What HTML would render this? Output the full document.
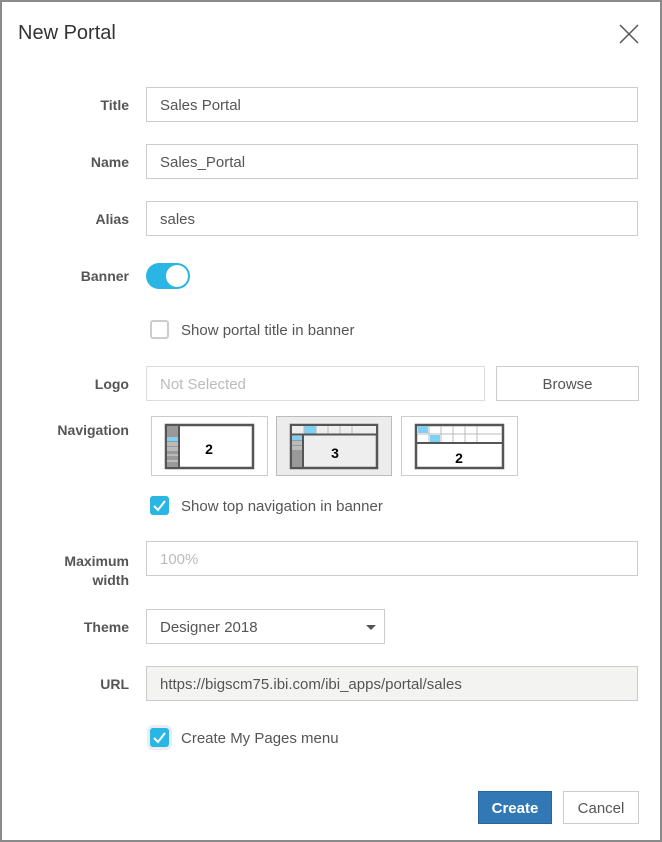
<!DOCTYPE html>
<html><head><style>
*{box-sizing:border-box;margin:0;padding:0}
body{width:662px;height:842px;background:#fff;font-family:"Liberation Sans",sans-serif;position:relative;overflow:hidden}
.frame{position:absolute;left:0;top:0;width:662px;height:842px;border:2px solid #8a8a8a}
.abs{position:absolute}
.lbl{position:absolute;right:533px;font-size:14px;font-weight:bold;color:#555;text-align:right;margin-top:1px}
.inp{position:absolute;left:146px;width:492px;height:35px;border:1px solid #ccc;font-size:15px;color:#555;padding:0 13px;line-height:35px}
.cb{position:absolute;left:150px;width:19px;height:19px;border-radius:3px;background:#2ab6e4}
.cb.off{background:#fff;border:2px solid #ccc}
.cbt{position:absolute;left:181px;font-size:15px;color:#555;margin-top:1px}
.nav{position:absolute;top:416px;height:60px;border:1px solid #ccc;background:#fff}
</style></head><body>
<div class="frame"></div>
<div class="abs" style="left:18px;top:22px;font-size:20px;color:#333">New Portal</div>
<svg class="abs" style="left:619px;top:24px" width="20" height="20"><path d="M1 1L19 19M19 1L1 19" stroke="#555" stroke-width="1.5"/></svg>

<div class="lbl" style="top:96px">Title</div>
<div class="inp" style="top:87px">Sales Portal</div>
<div class="lbl" style="top:153px">Name</div>
<div class="inp" style="top:144px">Sales_Portal</div>
<div class="lbl" style="top:210px">Alias</div>
<div class="inp" style="top:201px">sales</div>
<div class="lbl" style="top:267px">Banner</div>
<div class="abs" style="left:146px;top:263px;width:44px;height:26px;border-radius:13px;background:#2ab6e4"><div class="abs" style="left:20px;top:2px;width:22px;height:22px;border-radius:11px;background:#fff"></div></div>
<div class="cb off" style="top:320px"></div>
<div class="cbt" style="top:321px">Show portal title in banner</div>

<div class="lbl" style="top:375px">Logo</div>
<div class="inp" style="top:366px;width:339px;border-color:#ddd;color:#bbb">Not Selected</div>
<div class="inp" style="top:366px;left:496px;width:143px;text-align:center;color:#555">Browse</div>

<div class="lbl" style="top:421px">Navigation</div>
<div class="nav" style="left:151px;width:117px">
<svg width="117" height="60"><rect x="14" y="8" width="87" height="43" fill="#fff" stroke="#555" stroke-width="2.5"/>
<rect x="15" y="9" width="12" height="41" fill="#999"/><rect x="15" y="20" width="12" height="4" fill="#7fd0f7"/><rect x="15" y="25" width="12" height="4" fill="#bbb"/><rect x="15" y="30" width="12" height="4" fill="#bbb"/><line x1="15" y1="38" x2="27" y2="38" stroke="#ddd"/><line x1="15" y1="44" x2="27" y2="44" stroke="#ddd"/><line x1="27" y1="9" x2="27" y2="50" stroke="#555" stroke-width="2"/>
<text x="57" y="37" font-size="14" font-weight="bold" text-anchor="middle" font-family="Liberation Sans">2</text></svg></div>
<div class="nav" style="left:276px;width:116px;background:#ececec;border-color:#bbb">
<svg width="116" height="60"><rect x="14" y="8" width="86" height="43" fill="#eee" stroke="#555" stroke-width="2.5"/>
<rect x="15" y="9" width="84" height="8" fill="#eee"/><rect x="27" y="9" width="12" height="8" fill="#7fd0f7"/>
<path d="M27 9V17M39 9V17M51 9V17M63 9V17M75 9V17" stroke="#bbb"/><line x1="15" y1="17.5" x2="99" y2="17.5" stroke="#555" stroke-width="2"/>
<rect x="15" y="18" width="11" height="32" fill="#999"/><rect x="15" y="19" width="11" height="4" fill="#7fd0f7"/><rect x="15" y="24" width="11" height="4" fill="#bbb"/><rect x="15" y="29" width="11" height="4" fill="#bbb"/><line x1="26" y1="18" x2="26" y2="50" stroke="#555" stroke-width="2"/>
<text x="58" y="41" font-size="14" font-weight="bold" text-anchor="middle" font-family="Liberation Sans">3</text></svg></div>
<div class="nav" style="left:401px;width:117px">
<svg width="117" height="60"><rect x="14" y="8" width="87" height="43" fill="#fff" stroke="#555" stroke-width="2.5"/>
<rect x="16" y="9" width="10" height="7" fill="#7fd0f7"/><rect x="28" y="18" width="10" height="7" fill="#7fd0f7"/>
<path d="M27 9V25M39 9V25M51 9V25M63 9V25M75 9V25M15 17H100" stroke="#bbb"/><line x1="15" y1="26" x2="100" y2="26" stroke="#555" stroke-width="2"/>
<text x="57" y="46" font-size="14" font-weight="bold" text-anchor="middle" font-family="Liberation Sans">2</text></svg></div>

<div class="cb" style="top:496px"><svg width="19" height="19"><path d="M4 10L8 14L15 5" stroke="#fff" stroke-width="2" fill="none"/></svg></div>
<div class="cbt" style="top:497px">Show top navigation in banner</div>

<div class="lbl" style="top:551px;line-height:19px">Maximum<br>width</div>
<div class="inp" style="top:541px;color:#bbb">100%</div>
<div class="lbl" style="top:618px">Theme</div>
<div class="inp" style="top:609px;width:239px">Designer 2018<span class="abs" style="left:219px;top:15px;width:0;height:0;border-left:5px solid transparent;border-right:5px solid transparent;border-top:5px solid #555"></span></div>
<div class="lbl" style="top:675px">URL</div>
<div class="inp" style="top:666px;background:#f3f4f2">https://bigscm75.ibi.com/ibi_apps/portal/sales</div>
<div class="cb" style="top:728px;box-shadow:0 0 0 3px #e8eef2"><svg width="19" height="19"><path d="M4 10L8 14L15 5" stroke="#fff" stroke-width="2" fill="none"/></svg></div>
<div class="cbt" style="top:729px">Create My Pages menu</div>

<div class="abs" style="left:478px;top:791px;width:74px;height:33px;background:#3278b4;border:1px solid #2a6699;color:#fff;font-weight:bold;font-size:15px;text-align:center;line-height:33px">Create</div>
<div class="abs" style="left:563px;top:791px;width:76px;height:33px;border:1px solid #ccc;color:#555;font-size:15px;text-align:center;line-height:33px">Cancel</div>
</body></html>
